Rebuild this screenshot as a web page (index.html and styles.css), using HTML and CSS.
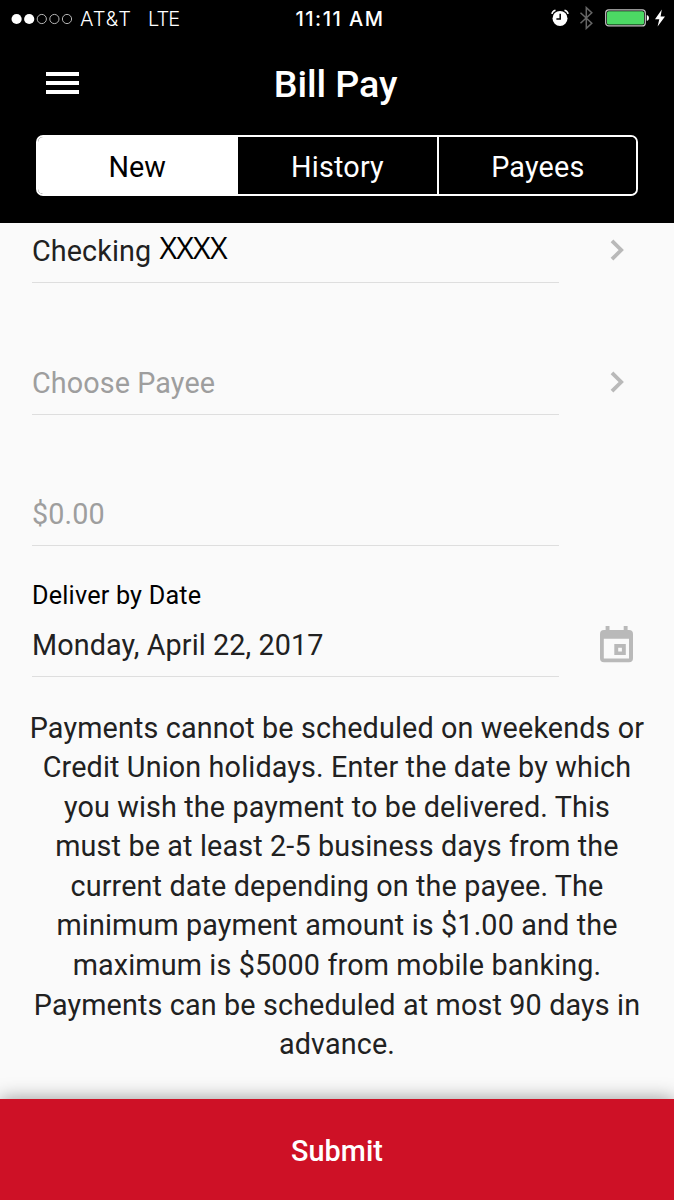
FILE: index.html
```html
<!DOCTYPE html>
<html lang="en">
<head>
    <meta charset="UTF-8">
    <meta name="viewport" content="width=device-width, initial-scale=1.0">
    <title>Bill Pay</title>
    <link rel="stylesheet" href="styles.css">
</head>
<body>

    <header class="header">
        <div class="status-bar">
            <div class="carrier">
                <svg class="signal" width="62" height="12" viewBox="0 0 62 12">
                    <circle cx="5.6" cy="6" r="5.1" fill="#fff"/>
                    <circle cx="18.2" cy="6" r="5.1" fill="#fff"/>
                    <g fill="none" stroke="#b5b5b5" stroke-width="1">
                        <circle cx="30.8" cy="6" r="4.6"/>
                        <circle cx="43.4" cy="6" r="4.6"/>
                        <circle cx="56" cy="6" r="4.6"/>
                    </g>
                </svg>
                <span class="carrier-name">AT&amp;T</span>
                <span class="network">LTE</span>
            </div>
            <div class="time">11:11 AM</div>
            <div class="indicators">
                <svg class="alarm" width="18" height="18" viewBox="0 0 18 18">
                    <circle cx="9" cy="9.4" r="7.5" fill="#fff"/>
                    <path d="M9.2 4.8v5.2H5.4" fill="none" stroke="#000" stroke-width="1.5"/>
                    <path d="M.9 4.9Q1.6 2 4.5 1.3M17.1 4.9Q16.4 2 13.5 1.3" fill="none" stroke="#fff" stroke-width="1.6"/>
                </svg>
                <svg class="bluetooth" width="15" height="24" viewBox="0 0 15 24">
                    <path d="M1.5 6.8l11.3 10.4L7.3 22.4V1.6l5.5 5.2L1.5 17.2" fill="none" stroke="#666" stroke-width="1.5"/>
                </svg>
                <svg class="battery" width="45" height="18" viewBox="0 0 45 18">
                    <rect x=".7" y=".9" width="39.6" height="16" rx="3" fill="none" stroke="#c4c4c4" stroke-width="1.2"/>
                    <rect x="2" y="2.2" width="37" height="13.4" rx="1.6" fill="#4cd964"/>
                    <path d="M41.8 6q2.2.6 2.2 3t-2.2 3z" fill="#fff"/>
                </svg>
                <svg class="bolt" width="12" height="18" viewBox="0 0 12 18">
                    <path d="M7.8.6L1 10.3h4.3L3.6 17.4 11 7.5H6.6z" fill="#fff"/>
                </svg>
            </div>
        </div>

        <div class="title-bar">
            <button class="menu" aria-label="Menu">
                <span></span>
                <span></span>
                <span></span>
            </button>
            <h1>Bill Pay</h1>
        </div>

        <nav class="tabs">
            <button class="tab active">New</button>
            <button class="tab">History</button>
            <button class="tab">Payees</button>
        </nav>
    </header>

    <main class="form">
        <div class="row account">
            <div class="field">Checking <span class="mask">XXXX</span></div>
            <svg class="chevron" width="14" height="22" viewBox="0 0 14 22">
                <path d="M2 1.8l9.2 9.2L2 20.2" fill="none" stroke="#b9b9b9" stroke-width="3.8"/>
            </svg>
        </div>
        <div class="row">
            <div class="field placeholder">Choose Payee</div>
            <svg class="chevron" width="14" height="22" viewBox="0 0 14 22">
                <path d="M2 1.8l9.2 9.2L2 20.2" fill="none" stroke="#b9b9b9" stroke-width="3.8"/>
            </svg>
        </div>
        <div class="row">
            <div class="field placeholder">$0.00</div>
        </div>
        <div class="row date">
            <div class="field">
                <label>Deliver by Date</label>
                Monday, April 22, 2017
            </div>
            <svg class="calendar" width="33" height="37" viewBox="0 0 33 37">
                <path d="M5.6 0h3.9v4h14.2V0h3.9v4H29q4 0 4 4v24.3q0 4-4 4H4q-4 0-4-4V8q0-4 4-4h1.6zM3.8 12.7v19.8h25.2V12.7z" fill="#b9b9b9" fill-rule="evenodd"/>
                <path d="M14.3 18h11.5v11H14.3zM18.2 21.8v3.6h3.7v-3.6z" fill="#b9b9b9" fill-rule="evenodd"/>
            </svg>
        </div>

        <p class="note">Payments cannot be scheduled on weekends or Credit Union holidays. Enter the date by which you wish the payment to be delivered. This must be at least 2-5 business days from the current date depending on the payee. The minimum payment amount is $1.00 and the maximum is $5000 from mobile banking. Payments can be scheduled at most 90 days in advance.</p>
    </main>

    <button class="submit">Submit</button>

</body>
</html>
```

FILE: styles.css
```css
* {
    box-sizing: border-box;
}
body {
    margin: 0;
    height: 1200px;
    display: flex;
    flex-direction: column;
    overflow: hidden;
    background-color: #fafafa;
    font-family: Roboto, sans-serif;
    font-size: 28.75px;
    letter-spacing: 0.1px;
    color: #212121;
}
button {
    font: inherit;
    letter-spacing: inherit;
    border: none;
    padding: 0;
    cursor: pointer;
}
svg {
    display: block;
    flex: none;
}

/* Header */
.header {
    height: 223px;
    flex: none;
    background-color: #000;
    color: #fff;
}
.status-bar {
    height: 37px;
    display: grid;
    grid-template-columns: 1fr auto 1fr;
    align-items: center;
    padding: 0 8px 0 11px;
    font-family: Inter, sans-serif;
    font-size: 20px;
    letter-spacing: 0;
}
.carrier {
    display: flex;
    align-items: center;
    font-weight: 300;
}
.carrier-name {
    margin-left: 7px;
    letter-spacing: 1px;
}
.network {
    margin-left: 16px;
    letter-spacing: -0.8px;
}
.time {
    padding-left: 3px;
    font-weight: 500;
    letter-spacing: 1.5px;
}
.indicators {
    display: flex;
    align-items: center;
    justify-content: flex-end;
    padding-bottom: 1px;
}
.bluetooth {
    margin-left: 10px;
}
.battery {
    margin-left: 11px;
}
.bolt {
    margin-left: 4px;
}
.title-bar {
    height: 98px;
    display: grid;
    grid-template-columns: 80px 1fr 80px;
    align-items: center;
}
.menu {
    display: flex;
    flex-direction: column;
    gap: 5px;
    width: 33px;
    margin-left: 46px;
    margin-top: -6px;
    background: none;
}
.menu span {
    height: 4px;
    background-color: #fff;
}
h1 {
    margin: -5px 3px 0 0;
    font-size: 37.7px;
    font-weight: 500;
    letter-spacing: -0.1px;
    text-align: center;
}
.tabs {
    display: flex;
    height: 61px;
    margin: 0 36px;
    border: 2px solid #fff;
    border-radius: 7px;
    overflow: hidden;
}
.tab {
    flex: 1;
    padding-top: 2px;
    background-color: #000;
    color: #fff;
    letter-spacing: 0.2px;
}
.tab + .tab + .tab {
    margin-right: -1px;
    border-left: 2px solid #fff;
}
.tab.active {
    background-color: #fff;
    color: #000;
    padding-right: 2px;
    letter-spacing: 0;
}

/* Form */
.form {
    flex: 1;
}
.row {
    display: flex;
    align-items: flex-end;
    height: 131.5px;
    padding-left: 32px;
}
.row.account {
    height: 60px;
}
.row.date {
    height: 131px;
}
.field {
    width: 527px;
    padding-bottom: 14px;
    border-bottom: 1px solid #dedede;
    line-height: 34px;
}
.field label {
    display: block;
    margin-bottom: 15px;
    font-size: 25.2px;
    letter-spacing: 0.2px;
    color: #000;
}
.placeholder {
    color: #9e9e9e;
}
.mask {
    display: inline-block;
    line-height: 20px;
    transform: translate(1px, -2px);
    font-family: "Open Sans", sans-serif;
    font-size: 30.5px;
    font-weight: 400;
    letter-spacing: -0.8px;
    color: #000;
}
.chevron {
    margin: 0 0 22px 51px;
}
.calendar {
    margin: 0 0 14px 41px;
}
.note {
    margin: 31.5px 28px 0;
    line-height: 39.6px;
    text-align: center;
    letter-spacing: 0.14px;
}

/* Submit */
.submit {
    height: 101px;
    flex: none;
    padding-top: 2px;
    background-color: #ce1126;
    box-shadow: 0 0 18px rgba(0, 0, 0, 0.4);
    color: #fff;
    font-weight: 500;
}
```
